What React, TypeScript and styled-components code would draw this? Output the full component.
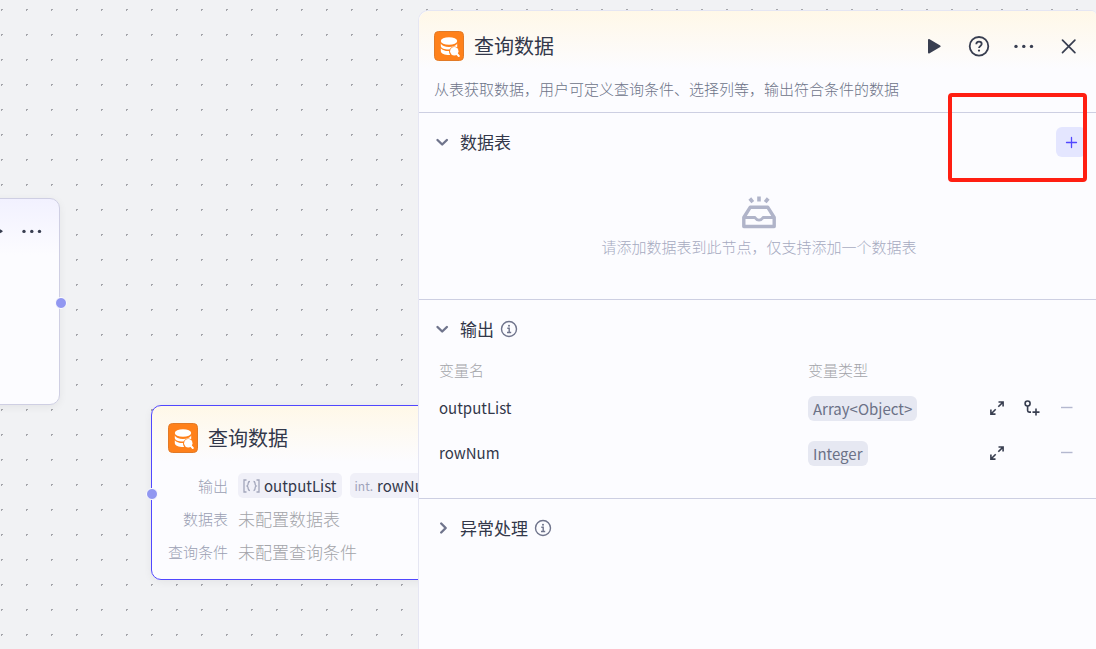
import React from 'react';
import styled, { createGlobalStyle, css } from 'styled-components';

const GlobalStyle = createGlobalStyle`
  * { box-sizing: border-box; }
  body {
    margin: 0;
    font-family: "Noto Sans CJK SC", "Noto Sans", sans-serif;
    color: #33384a;
  }
  button { font: inherit; color: inherit; }
`;

const Workspace = styled.main`
  display: flex;
  min-height: 100vh;
  overflow: hidden;
  background-color: #f1f2f4;
  background-image: radial-gradient(circle at 50% 50%, #a4a5aa 0, #a4a5aa 1px, transparent 1px);
  background-size: 25px 25px;
  background-position: -11px -3px;
`;

const Canvas = styled.section`
  position: relative;
  flex: 1 1 0;
  min-width: 0;
  overflow: hidden;
`;

const Node = styled.article<{ $selected?: boolean; $tint: string }>`
  position: absolute;
  border: 1px solid ${(p) => (p.$selected ? '#5147ff' : '#cfcfe3')};
  border-radius: 10px;
  background: linear-gradient(${(p) => p.$tint}, #fcfcff 56px);
  box-shadow: 0 2px 8px rgba(0, 0, 0, 0.06);
`;

const StartNode = styled(Node)`
  left: -390px;
  top: 198px;
  width: 450px;
  height: 207px;
`;

const QueryNode = styled(Node)`
  left: 151px;
  top: 405px;
  width: 450px;
  padding: 17px 16px 11px;
`;

const Port = styled.span<{ $side: 'left' | 'right' }>`
  position: absolute;
  top: ${(p) => (p.$side === 'left' ? '82px' : '98px')};
  ${(p) => (p.$side === 'left' ? css`left: -6px;` : css`right: -8px;`)}
  width: 12px;
  height: 12px;
  border: 1px solid #fff;
  border-radius: 50%;
  background: #9197f1;
`;

const StartActions = styled.div`
  display: flex;
  justify-content: flex-end;
  gap: 6px;
  padding: 17px 12px;
`;

const Heading = styled.div`
  display: flex;
  align-items: center;
  gap: 10px;
`;

const Title = styled.h2`
  flex: 1;
  margin: 0;
  font-size: 20px;
  font-weight: 400;
  line-height: 30px;
`;

const NodeFields = styled.dl`
  display: grid;
  grid-template-columns: 60px 1fr;
  column-gap: 10px;
  grid-auto-rows: 33px;
  align-items: center;
  margin: 16px 0 0;
`;

const FieldLabel = styled.dt`
  font-size: 15px;
  font-weight: 300;
  line-height: 22px;
  text-align: right;
  white-space: nowrap;
  color: #9a9fb3;
`;

const FieldValue = styled.dd`
  display: flex;
  gap: 8px;
  margin: 0;
  font-size: 17px;
  font-weight: 300;
  line-height: 25px;
  color: #a3a4a9;
`;

const Chip = styled.span`
  display: flex;
  align-items: center;
  gap: 4px;
  height: 25px;
  padding: 0 5px;
  border-radius: 5px;
  background: #f0f0f8;
  color: #33384a;
  font-size: 15px;
  font-weight: 400;
`;

const ChipKind = styled.span`
  color: #9fa3ba;
  font-size: 12px;
`;

const Panel = styled.aside`
  position: relative;
  display: flex;
  flex-direction: column;
  width: 678px;
  max-width: 100%;
  margin-top: 10px;
  border: 1px solid #e5e6f3;
  border-width: 1px 0 0 1px;
  border-radius: 10px 5px 0 0;
  background: #fcfcff;
`;

const PanelHeader = styled.header`
  padding: 20px 12px 12px 15px;
  border-bottom: 1px solid #cdcfe2;
  border-radius: 10px 5px 0 0;
  background: linear-gradient(#fff8e8, #fcfcff 58px);
`;

const HeaderActions = styled.div`
  display: flex;
  gap: 15px;
`;

const IconButton = styled.button`
  display: flex;
  align-items: center;
  justify-content: center;
  flex: none;
  width: 30px;
  height: 30px;
  padding: 0;
  border: 0;
  border-radius: 6px;
  background: transparent;
  color: #383e50;
  cursor: pointer;
  &:disabled { color: #b4b8cf; cursor: default; }
`;

const AddButton = styled(IconButton)`
  background: #e4e6ff;
  color: #5147ff;
`;

const Description = styled.p`
  margin: 17px 0 0;
  font-size: 15px;
  font-weight: 300;
  line-height: 22px;
  color: #6c7388;
`;

const Section = styled.section<{ $last?: boolean }>`
  padding: 14px 10px 23px 13px;
  border-bottom: ${(p) => (p.$last ? '0' : '1px solid #cdcfe2')};
`;

const SectionHead = styled.div`
  display: flex;
  align-items: center;
  justify-content: space-between;
  min-height: 30px;
`;

const Toggle = styled.button`
  display: flex;
  align-items: center;
  gap: 8px;
  padding: 0;
  border: 0;
  background: transparent;
  font-size: 17px;
  line-height: 26px;
  color: #33384a;
  cursor: pointer;
  svg { color: #6f748c; }
`;

const ToggleText = styled.span`
  display: flex;
  align-items: center;
  gap: 6px;
`;

const Empty = styled.div`
  display: flex;
  flex-direction: column;
  align-items: center;
  gap: 7px;
  padding: 39px 0 18px;
  font-size: 15px;
  font-weight: 300;
  line-height: 22px;
  color: #a6aabf;
`;

const Variables = styled.table`
  width: calc(100% - 11px);
  margin: 11px 4px 0 7px;
  border-collapse: collapse;
  table-layout: fixed;
  font-size: 15px;
  th {
    height: 30px;
    padding: 0;
    text-align: left;
    font-size: 15px;
    font-weight: 300;
    line-height: 22px;
    color: #a3a4a9;
  }
  td { height: 45px; padding: 0; line-height: 25px; }
`;

const TypeColumn = styled.col` width: 174px; `;
const ActionColumn = styled.col` width: 100px; `;

const TypeTag = styled.span`
  display: inline-block;
  padding: 0 5px;
  border-radius: 6px;
  background: #e6e8f2;
  color: #6b7186;
  vertical-align: middle;
`;

const RowActions = styled.div`
  display: grid;
  grid-template-columns: repeat(3, 30px);
  gap: 5px;
  button:last-child { grid-column: 3; }
`;

const Highlight = styled.div`
  position: absolute;
  top: 82px;
  right: 9px;
  width: 139px;
  height: 89px;
  border: 4px solid #ff1f12;
  border-radius: 4px;
  pointer-events: none;
`;

const DatabaseLogo = () => (
  <svg width="30" height="30" viewBox="0 0 30 30" aria-hidden="true">
    <rect x=".5" y=".5" width="29" height="29" rx="4" fill="#ff811a" stroke="#e27a26" />
    <ellipse cx="15" cy="10" rx="8.2" ry="3.8" fill="#fff" />
    <path d="M6.8 12.5c1 2.4 4.2 3.4 8.2 3.4 4 0 7.200-1 8.200-3.400v3.800a5.500 5.500 0 0 0-7.800 2.200c-4.300.2-8-.8-8.600-3.200z" fill="#fff" />
    <path d="M6.800 17.200c1.500 2 4.400 2.900 8.200 2.800a6 6 0 0 0 1.200 4C11.500 24.200 6.800 23 6.800 20z" fill="#fff" />
    <circle cx="20.300" cy="20.200" r="4.200" fill="#fff" />
    <path d="m22.500 22.500 2.300 2.500" stroke="#fff" strokeWidth="2" strokeLinecap="round" />
  </svg>
);

const PlayIcon = () => (
  <svg width="20" height="20" viewBox="0 0 20 20" fill="currentColor">
    <path d="M4 3.900c0-.7.600-1.100 1.200-.8l11 6.300c.6.400.6 1.300 0 1.700L5.200 17.400c-.6.300-1.200-.1-1.200-.8z" />
  </svg>
);

const HelpIcon = () => (
  <svg width="22" height="22" viewBox="0 0 22 22" fill="none" stroke="currentColor" strokeWidth="1.800">
    <circle cx="11" cy="11.300" r="9.300" />
    <path d="M8.300 9.300c0-1.700 1.100-2.700 2.700-2.700s2.700 1 2.700 2.400c0 1.900-2.700 2-2.700 4.100" />
    <circle cx="11" cy="15.600" r="1.100" fill="currentColor" stroke="none" />
  </svg>
);

const MoreIcon = () => (
  <svg width="20" height="20" viewBox="0 0 20 20" fill="currentColor">
    <circle cx="2" cy="10.400" r="1.700" />
    <circle cx="9.800" cy="10.400" r="1.700" />
    <circle cx="17.500" cy="10.400" r="1.700" />
  </svg>
);

const CloseIcon = () => (
  <svg width="20" height="20" viewBox="0 0 20 20" fill="none" stroke="currentColor" strokeWidth="1.700" strokeLinecap="round">
    <path d="m3.500 4.200 12.400 12.400M15.900 4.200 3.500 16.600" />
  </svg>
);

const PlusIcon = () => (
  <svg width="14" height="14" viewBox="0 0 14 14" fill="none" stroke="currentColor" strokeWidth="1.300" strokeLinecap="round">
    <path d="M7.500 2.500v10M2.500 7.500h10" />
  </svg>
);

const ChevronIcon = ({ open }: { open: boolean }) => (
  <svg width="20" height="20" viewBox="0 0 20 20" fill="none" stroke="currentColor" strokeWidth="2.400" strokeLinecap="round" strokeLinejoin="round">
    <path d={open ? 'm5.500 8 4.700 4.500L14.900 8' : 'm9.200 5.500 4.500 4.500-4.500 4.500'} />
  </svg>
);

const InfoIcon = () => (
  <svg width="18" height="18" viewBox="0 0 18 18" fill="none" stroke="currentColor" strokeWidth="1.400">
    <circle cx="9" cy="9" r="7.500" />
    <path d="M7.300 8.300H9.200v4M7 12.500h4.200" />
    <circle cx="9" cy="5.700" r="1" fill="currentColor" stroke="none" />
  </svg>
);

const InboxIcon = () => (
  <svg width="34" height="33" viewBox="0 0 34 33" fill="none" stroke="#b0b4c9" strokeWidth="3.400" strokeLinejoin="round">
    <path d="M1.800 21.500 8.300 11.200h17.400l6.500 10.300v9H1.800z" />
    <path d="M2 21.500h10.800c.6 0 .8 2.600 4.200 2.600s3.600-2.600 4.200-2.600H32" strokeWidth="2.800" />
    <path d="M17 .5v5M7.800 2.500l3 3.700M26.200 2.500l-3 3.700" strokeWidth="3.600" />
  </svg>
);

const ExpandIcon = () => (
  <svg width="16" height="16" viewBox="0 0 16 16" fill="none" stroke="currentColor" strokeWidth="1.600">
    <path d="M9.500 2h4.600v4.600M14 2.100 9.300 6.800M6.500 14.100H1.900V9.500M2 14l4.700-4.700" />
  </svg>
);

const AddChildIcon = () => (
  <svg width="16" height="16" viewBox="0 0 16 16" fill="none" stroke="currentColor" strokeWidth="1.600">
    <circle cx="3.600" cy="3.500" r="2.500" />
    <path d="M3.600 6v4.500c0 1 .6 1.600 1.600 1.600h1.800M8.500 12.100h7M12 8.600v7" />
  </svg>
);

const MinusIcon = () => (
  <svg width="14" height="14" viewBox="0 0 14 14" stroke="currentColor" strokeWidth="1.400">
    <path d="M1 6.500h11.500" />
  </svg>
);

const ArrayIcon = () => (
  <svg width="17" height="14" viewBox="0 0 17 14" fill="none" stroke="#a2a6bb" strokeWidth="1.300">
    <path d="M3.500 1H1v12h2.500M13.500 1H16v12h-2.500" />
    <path d="M7 2.500c-1.500 0-1.800.6-1.800 1.700 0 1.500-.2 2.200-1.200 2.800 1 .6 1.200 1.300 1.200 2.800 0 1.100.3 1.700 1.800 1.700M10.500 2.500c1.200 0 1.500.6 1.500 1.700 0 1.500.2 2.200 1.200 2.800-1 .6-1.200 1.300-1.200 2.800 0 1.100-.3 1.700-1.500 1.700" />
  </svg>
);

const variables = [
  { name: 'outputList', type: 'Array<Object>', nested: true },
  { name: 'rowNum', type: 'Integer', nested: false },
];

export default function App() {
  return (
    <>
      <GlobalStyle />
      <Workspace>
        <Canvas>
          <StartNode $tint="#f2f1ff">
            <StartActions>
              <IconButton aria-label="运行"><PlayIcon /></IconButton>
              <IconButton aria-label="更多"><MoreIcon /></IconButton>
            </StartActions>
            <Port $side="right" />
          </StartNode>
          <QueryNode $tint="#fff8e8" $selected>
            <Heading>
              <DatabaseLogo />
              <Title>查询数据</Title>
            </Heading>
            <NodeFields>
              <FieldLabel>输出</FieldLabel>
              <FieldValue>
                <Chip><ArrayIcon />outputList</Chip>
                <Chip><ChipKind>int.</ChipKind>rowNum</Chip>
              </FieldValue>
              <FieldLabel>数据表</FieldLabel>
              <FieldValue>未配置数据表</FieldValue>
              <FieldLabel>查询条件</FieldLabel>
              <FieldValue>未配置查询条件</FieldValue>
            </NodeFields>
            <Port $side="left" />
          </QueryNode>
        </Canvas>

        <Panel>
          <PanelHeader>
            <Heading>
              <DatabaseLogo />
              <Title>查询数据</Title>
              <HeaderActions>
                <IconButton aria-label="运行"><PlayIcon /></IconButton>
                <IconButton aria-label="帮助"><HelpIcon /></IconButton>
                <IconButton aria-label="更多"><MoreIcon /></IconButton>
                <IconButton aria-label="关闭"><CloseIcon /></IconButton>
              </HeaderActions>
            </Heading>
            <Description>从表获取数据，用户可定义查询条件、选择列等，输出符合条件的数据</Description>
          </PanelHeader>

          <Section>
            <SectionHead>
              <Toggle aria-expanded="true"><ChevronIcon open />数据表</Toggle>
              <AddButton aria-label="添加数据表"><PlusIcon /></AddButton>
            </SectionHead>
            <Empty>
              <InboxIcon />
              请添加数据表到此节点，仅支持添加一个数据表
            </Empty>
          </Section>

          <Section>
            <SectionHead>
              <Toggle aria-expanded="true">
                <ChevronIcon open />
                <ToggleText>输出<InfoIcon /></ToggleText>
              </Toggle>
            </SectionHead>
            <Variables>
              <colgroup>
                <col />
                <TypeColumn />
                <ActionColumn />
              </colgroup>
              <thead>
                <tr>
                  <th scope="col">变量名</th>
                  <th scope="col">变量类型</th>
                  <th aria-label="操作" />
                </tr>
              </thead>
              <tbody>
                {variables.map((v) => (
                  <tr key={v.name}>
                    <td>{v.name}</td>
                    <td><TypeTag>{v.type}</TypeTag></td>
                    <td>
                      <RowActions>
                        <IconButton aria-label="展开"><ExpandIcon /></IconButton>
                        {v.nested && <IconButton aria-label="添加子项"><AddChildIcon /></IconButton>}
                        <IconButton aria-label="删除" disabled><MinusIcon /></IconButton>
                      </RowActions>
                    </td>
                  </tr>
                ))}
              </tbody>
            </Variables>
          </Section>

          <Section $last>
            <SectionHead>
              <Toggle aria-expanded="false">
                <ChevronIcon open={false} />
                <ToggleText>异常处理<InfoIcon /></ToggleText>
              </Toggle>
            </SectionHead>
          </Section>
          <Highlight />
        </Panel>
      </Workspace>
    </>
  );
}
